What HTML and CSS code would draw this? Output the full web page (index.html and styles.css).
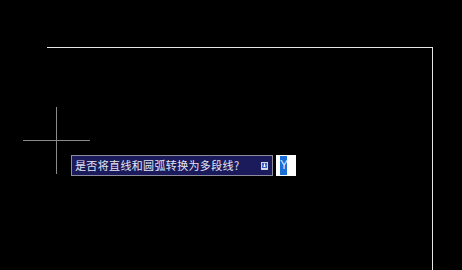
FILE: index.html
```html
<!DOCTYPE html>
<html lang="zh">
<head>
  <meta charset="UTF-8">
  <title>PEDIT</title>
  <link rel="stylesheet" href="styles.css">
</head>
<body>

<div class="canvas">
  <div class="border-top"></div>
  <div class="border-right"></div>

  <div class="cursor-h"></div>
  <div class="cursor-v"></div>

  <div class="prompt">
    <div class="prompt-box">
      <span class="prompt-text">是否将直线和圆弧转换为多段线?</span>
      <span class="prompt-icon">
        <svg width="7" height="8" viewBox="0 0 7 8">
          <rect x="0" y="0" width="7" height="8" fill="#c8d4f0"/>
          <rect x="1" y="1" width="5" height="6" fill="#3a5cc0"/>
          <path d="M3.5 1.5 V5 M2 3.5 L3.5 5 L5 3.5" stroke="#fff" stroke-width="1" fill="none"/>
          <path d="M1 6.5 H6" stroke="#e0e0e0" stroke-width="1"/>
        </svg>
      </span>
    </div>
    <div class="prompt-input"><span class="sel">Y</span></div>
  </div>
</div>

</body>
</html>
```

FILE: styles.css
```css
body {
  margin: 0;
  background: #000;
  font-family: "Noto Sans CJK SC", "DejaVu Sans", sans-serif;
}
.canvas {
  position: relative;
  width: 462px;
  height: 270px;
  background: #000;
  overflow: hidden;
}
.border-top {
  position: absolute;
  left: 47px;
  top: 47px;
  width: 386px;
  height: 1px;
  background: #e6e6e6;
}
.border-right {
  position: absolute;
  left: 432px;
  top: 47px;
  width: 1px;
  height: 230px;
  background: #e6e6e6;
}
.cursor-h {
  position: absolute;
  left: 23px;
  top: 140px;
  width: 67px;
  height: 1px;
  background: #8a8a8a;
}
.cursor-v {
  position: absolute;
  left: 56px;
  top: 107px;
  width: 1px;
  height: 67px;
  background: #8a8a8a;
}
.prompt {
  position: absolute;
  left: 71px;
  top: 155px;
  display: flex;
  gap: 3px;
}
.prompt-box {
  width: 197px;
  height: 19px;
  border: 1px solid #8c8c9c;
  background: #1b1a5a;
  display: flex;
  align-items: center;
  padding-left: 3px;
  box-sizing: content-box;
}
.prompt-text {
  flex: 1;
  color: #e4e4f4;
  font-size: 11px;
  letter-spacing: 0.35px;
  line-height: 19px;
  white-space: nowrap;
}
.prompt-icon {
  display: flex;
  margin-right: 4px;
  margin-top: 1px;
}
.prompt-input {
  width: 20px;
  height: 21px;
  background: #fff;
  display: flex;
  align-items: center;
  padding-left: 4px;
  box-sizing: border-box;
}
.sel {
  background: #1a6fd6;
  color: #dfe8ff;
  font-family: "Liberation Sans", sans-serif;
  font-size: 12px;
  line-height: 19px;
  width: 7px;
  text-align: center;
}
```
